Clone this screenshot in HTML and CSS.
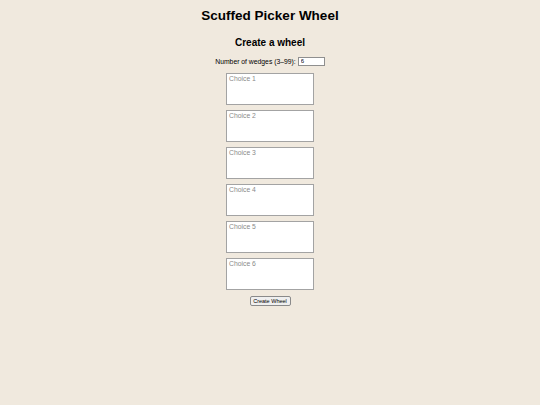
FILE: index.html
```html
<!DOCTYPE html>
<html lang="en">
<head>
  <meta charset="UTF-8">
  <title>Scuffed Picker Wheel</title>
  <link rel="stylesheet" href="styles.css">
</head>
<body>
  <h1 class="title">Scuffed Picker Wheel</h1>

  <!-- form untuk bikin wheel -->
  <div class="create">
    <h2>Create a wheel</h2>
    <div class="count-row">
      <label for="count">Number of wedges (3&ndash;99):</label>
      <input type="text" id="count" value="6">
    </div>
    <div class="choices">
      <textarea placeholder="Choice 1"></textarea>
      <textarea placeholder="Choice 2"></textarea>
      <textarea placeholder="Choice 3"></textarea>
      <textarea placeholder="Choice 4"></textarea>
      <textarea placeholder="Choice 5"></textarea>
      <textarea placeholder="Choice 6"></textarea>
    </div>
    <button class="btn-create">Create Wheel</button>
  </div>
</body>
</html>
```

FILE: styles.css
```css
body {
  margin: 0;
  background-color: #f0e9de;
  font-family: "Liberation Sans", Arial, sans-serif;
  color: #000;
}

.title {
  margin: 8px 0 0;
  font-size: 13.5px;
  line-height: 16px;
  text-align: center;
}

/* kolom di tengah */
.create {
  display: flex;
  flex-direction: column;
  align-items: center;
}

.create h2 {
  margin: 13px 0 0;
  font-size: 10px;
  line-height: 12px;
}

.count-row {
  display: flex;
  align-items: center;
  gap: 2px;
  margin-top: 7px;
  height: 10px;
  font-size: 6.8px;
}

.count-row input {
  width: 27px;
  height: 9px;
  box-sizing: border-box;
  padding: 0 2px;
  border: 1px solid #8f8f8f;
  font-family: inherit;
  font-size: 6px;
  background: #fff;
}

.choices {
  display: flex;
  flex-direction: column;
  gap: 5px;
  margin-top: 7px;
}

.choices textarea {
  width: 88px;
  height: 32px;
  box-sizing: border-box;
  margin: 0;
  padding: 1px 2px;
  border: 1px solid #a3a3a3;
  background: #fff;
  resize: none;
  font-family: inherit;
  font-size: 6.8px;
}

.choices textarea::placeholder {
  color: #8a8a8a;
}

.btn-create {
  margin-top: 6px;
  width: 41px;
  height: 10px;
  padding: 0;
  border: 1px solid #8a8a8a;
  border-radius: 2px;
  background: #efefef;
  font-family: inherit;
  font-size: 5.5px;
  line-height: 8px;
}
```
